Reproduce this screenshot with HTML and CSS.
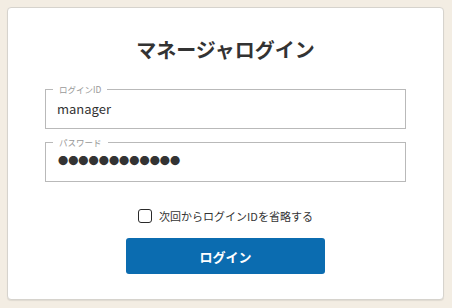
FILE: index.html
```html
<!DOCTYPE html>
<html lang="ja">
<head>
<meta charset="utf-8">
<title>マネージャログイン</title>
<link rel="stylesheet" href="styles.css">
</head>
<body>
<main class="card">
  <h1 class="title">マネージャログイン</h1>
  <form class="form">
    <fieldset class="field">
      <legend class="field-label">ログインID</legend>
      <input class="field-input" type="text" value="manager" readonly>
    </fieldset>
    <fieldset class="field field-gap">
      <legend class="field-label">パスワード</legend>
      <div class="field-input dots">●●●●●●●●●●●●</div>
    </fieldset>
    <label class="remember">
      <input class="check" type="checkbox">
      <span>次回からログインIDを省略する</span>
    </label>
    <button class="submit" type="button">ログイン</button>
  </form>
</main>
</body>
</html>
```
FILE: styles.css
```css
html, body {
  margin: 0;
  padding: 0;
}
body {
  background: #f3ede3;
  padding: 7px 8px 8px 7px;
  font-family: "Noto Sans CJK JP", "Noto Sans", sans-serif;
  color: #333;
  box-sizing: border-box;
  height: 308px;
}
.card {
  background: #fff;
  border: 1px solid #d6d3cd;
  border-radius: 4px;
  box-shadow: 0 1px 1px rgba(0,0,0,0.08);
  padding: 27px 37px 25px 37px;
  box-sizing: border-box;
  height: 293px;
}
.title {
  margin: 0;
  font-size: 20px;
  line-height: 30px;
  font-weight: 700;
  text-align: center;
  color: #333;
}
.form {
  display: flex;
  flex-direction: column;
  margin-top: 19px;
}
.field {
  margin: 0;
  border: 1px solid #b9b9b9;
  padding: 0 7px 6px 7px;
  min-width: 0;
}
.field-gap {
  margin-top: 8px;
}
.field-label {
  font-size: 8.5px;
  line-height: 10px;
  color: #999;
  padding: 0 6px;
}
.field-input {
  display: block;
  box-sizing: border-box;
  width: 100%;
  height: 28px;
  border: 0;
  outline: none;
  padding: 0 4px;
  margin: 0;
  font-family: "Noto Sans CJK JP", "Noto Sans", sans-serif;
  font-size: 13px;
  color: #333;
  background: transparent;
}
.dots {
  font-size: 10.2px;
  line-height: 28px;
  color: #333;
  padding-left: 5px;
}
.remember {
  align-self: center;
  display: flex;
  align-items: center;
  gap: 7px;
  margin-top: 25px;
  height: 18px;
  font-size: 11px;
  color: #333;
}
.check {
  appearance: none;
  -webkit-appearance: none;
  margin: 0;
  width: 14px;
  height: 14px;
  border: 1.5px solid #2a2a2a;
  border-radius: 3px;
  box-sizing: border-box;
  background: #fff;
}
.submit {
  align-self: center;
  margin-top: 13px;
  width: 199px;
  height: 36px;
  border: 0;
  border-radius: 3px;
  background: #0b6cb0;
  color: #fff;
  font-family: "Noto Sans CJK JP", "Noto Sans", sans-serif;
  font-size: 13px;
  font-weight: 700;
}
```
